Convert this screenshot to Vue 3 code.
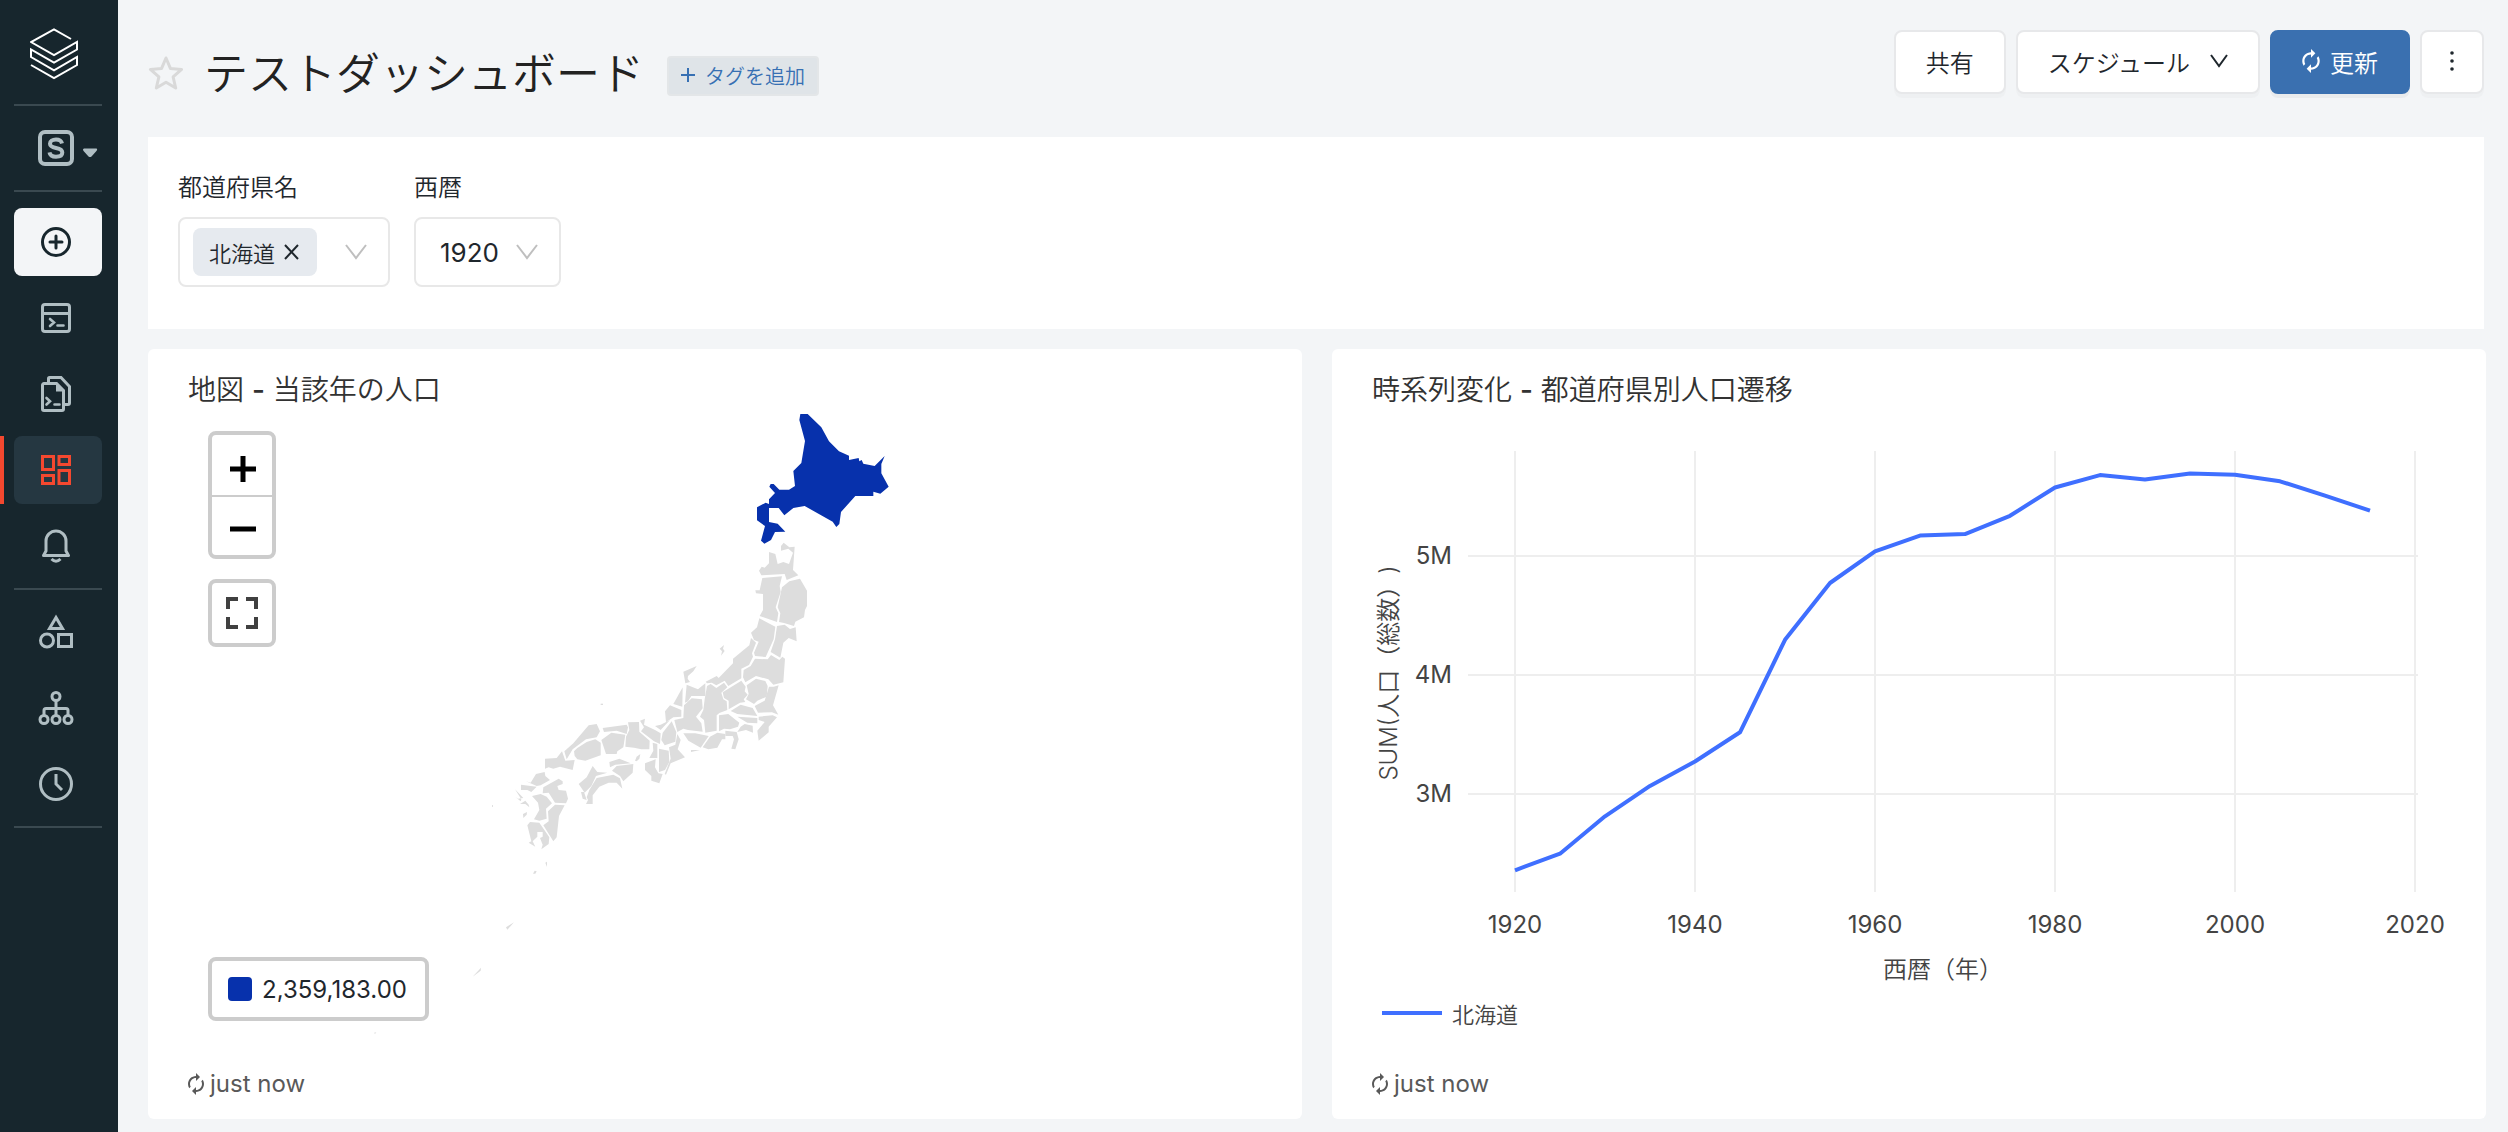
<script setup>
import { ref } from 'vue'

const year = ref('1920')
const years = ['1920', '1925', '1930', '1935', '1940', '1945', '1950', '1955', '1960']
const prefecture = ref('')

// Population of Hokkaido, one value for every five years from 1920
const population = [
  2359183, 2498679, 2812335, 3068282, 3272718, 3518389, 4295567, 4773087, 5039206, 5171800,
  5184287, 5338206, 5575989, 5679439, 5643647, 5692321, 5683062, 5627737, 5506419, 5381733,
]
const xOf = (y) => 143 + (y - 1920) * 9
const yOf = (v) => 145 + ((5000000 - v) * 119) / 1000000
const linePoints = population.map((v, i) => `${xOf(1920 + i * 5)},${yOf(v).toFixed(1)}`).join(' ')
const xTicks = [1920, 1940, 1960, 1980, 2000, 2020]
const yTicks = [5, 4, 3]

const hokkaido =
  '241,72 263,72 304,112 327,154 357,184 387,197 387,210 416,204 418,214 425,210 430,221 464,228 494,198 484,222 484,250 506,290 481,311 460,305 460,318 406,318 363,366 358,402 349,411 338,395 254,348 220,354 193,376 176,354 147,354 147,396 173,401 196,425 165,426 153,450 133,461 123,452 135,408 111,391 111,352 137,338 147,342 147,328 165,309 148,290 152,282 161,282 178,299 207,299 225,288 220,243 244,219 255,153 238,90'

const east = [
  '483,62 483,48 491,38 508,52 524,50 519,120 535,136 500,150 494,132 424,136 417,122 425,110 434,113 447,100 447,66 466,72 473,102 490,96 507,102 519,68 505,56',
  '427,144 486,139 479,168 482,186 467,232 475,250 471,276 419,258 429,240 429,192 408,190 406,181 419,181',
  '486,172 508,154 540,146 561,182 561,228 555,240 552,262 526,275 522,288 492,279 477,276 481,250 473,232',
  '418,265 466,290 461,328 437,381 405,378 402,368 416,335 402,330 393,308 411,292',
  '471,288 494,284 510,297 527,292 530,334 506,324 490,338 481,383 452,366 465,328',
  '388,346 393,324 408,338 396,370 399,380 387,405 364,416 364,445 325,468 314,452 289,466 275,458 261,460 257,455 290,438 296,444 339,400 339,386',
  '299,356 312,345 309,356 314,363 303,377 306,364',
  '405,386 443,388 453,375 478,390 487,380 495,386 490,457 460,464 445,448 408,438 376,457 369,442 371,420 392,408',
  '190,425 230,408 220,424 204,438 203,446 210,456 196,460',
  '188,472 187,530 160,522',
  '200,464 234,478 256,460 256,498 214,498 204,514 195,518',
  '261,468 272,462 289,474 312,458 322,472 304,488 310,508 320,514 322,540 298,549 290,556 290,602 256,608 252,570 240,560 250,540 254,508',
  '308,487 364,452 377,470 374,484 383,494 371,508 376,516 360,518 326,538 326,512 312,504',
  '380,466 408,446 436,453 443,468 440,500 412,512 402,522 378,508 386,492',
  '447,470 461,470 476,466 459,526 475,554 456,547 414,548 404,528 434,512',
  '332,543 362,524 398,534 412,558 352,552',
  '416,560 458,556 471,562 446,590 446,607 416,632 412,602 434,576 416,570',
  '352,560 412,564 412,580 382,578',
  '362,590 374,582 398,587 399,608 378,600 352,606',
  '297,556 325,552 358,578 354,590 330,598 312,596 297,604',
  '248,652 270,620 292,608 316,612 316,628 306,628 292,653 265,658',
  '316,602 350,606 356,628 346,658 334,656 342,628 338,618 316,618',
  '163,570 190,564 192,526 215,505 246,508 248,535 228,560 244,580 248,605 204,600 190,596 172,606',
  '190,610 226,610 266,618 242,653 205,632',
  '213,660 240,660 213,666',
  '135,544 150,526 184,540 184,560 160,562 138,577',
]

const west = [
  '645,138 662,134 690,120 662,150',
  '668,158 695,124 709,156 706,185 674,196 664,180',
  '600,122 615,116 612,134 645,150 662,160 660,192 642,184 603,154 612,142',
  '564,127 597,126 598,155 629,182 628,208 604,208 582,203 556,200 558,170 568,150',
  '638,188 652,192 652,234 628,234 640,212',
  '657,206 686,212 688,246 675,270 657,276',
  '687,202 706,194 712,162 722,180 713,208 735,232 692,250 678,284 674,282 692,236',
  '615,250 647,238 645,262 655,280 668,282 658,310 634,302 634,288 615,270',
  '488,144 560,134 564,142 560,162 530,152 492,156',
  '484,180 514,158 556,164 550,202 532,214 530,222 498,222',
  '373,214 400,190 446,136 470,132 480,154 470,172 438,178 398,208 380,238',
  '402,214 412,204 440,186 466,178 482,188 482,226 436,242 412,238 404,228',
  '315,236 350,234 366,214 376,242 404,240 398,270 360,260 340,266 326,262 315,266',
  '508,246 538,236 572,250 526,254 510,262',
  '516,272 530,258 580,252 578,278 550,304 540,288',
  '416,312 440,292 458,258 472,276 502,278 468,288 454,318 434,338',
  '440,352 448,330 470,294 520,284 540,295 547,326 530,308 506,308 478,320 458,346 458,372 438,372 444,360',
  '423,336 432,336 440,360 428,356',
  '585,242 590,230 601,222 598,236 590,244',
  '272,308 288,282 314,276 316,288 330,300 302,316 290,318 258,304',
  '243,314 290,320 274,336 262,330 243,330',
  '225,328 250,354 234,356 225,350 242,364 244,358',
  '240,372 256,362 266,374 268,382 256,372',
  '310,322 356,296 368,304 368,312 352,318 356,330 378,332 384,356 378,370 345,368 326,338 308,340',
  '276,348 302,342 320,350 336,370 318,386 320,416 298,422 282,418 298,390 294,368',
  '345,374 374,376 357,408 350,472 340,484 310,436 326,424 324,394',
  '262,436 270,426 298,428 328,472 326,492 304,508 308,494 300,474 308,470 308,456 292,456 292,470 278,484 286,500 266,488 274,484',
  '249,402 261,396 260,404 250,414',
  '316,548 321,545 321,561',
  '284,572 290,574 286,581 279,581',
  '198,742 222,727 202,749',
  '98,890 123,863 122,872',
  '482,71 489,71 489,75 482,75',
  '156,375 159,376 159,381 156,380',
  '-198,1058 -191,1057 -195,1062',
]
</script>

<template>
  <div class="app">
    <nav class="sidebar" aria-label="メイン">
      <a class="logo" href="#" aria-label="ホーム">
        <svg width="48" height="52" viewBox="0 0 48 52" fill="none" stroke="currentColor" stroke-width="2">
          <path d="M41 11 24 1.4 1 14l23 13L47 14v7.5L24 34.5 1 21.5V29l23 13.4L47 29v8L24 50 1 37" />
        </svg>
      </a>
      <hr />
      <button class="workspace" aria-label="ワークスペース">
        <svg width="60" height="36" viewBox="0 0 60 36" fill="none" stroke="currentColor">
          <rect x="2" y="2" width="32" height="32" rx="5" stroke-width="4" />
          <path d="M24 13.5c-.6-2.700-2.900-4-6-4-3.600 0-6 1.700-6 4.300 0 2.800 2.600 3.500 6 4.200 3.800.7 6.300 1.600 6.300 4.500 0 2.700-2.600 4.200-6.300 4.200s-6-1.500-6.500-4.400" stroke-width="4" />
          <path d="M46 18.500h12.500q1.500 1-.5 3l-4.500 5q-1.500 1-3 0l-4.500-5q-2-2 0-3z" fill="currentColor" stroke="none" />
        </svg>
      </button>
      <hr />
      <div class="nav-group first">
        <button class="nav-item create" aria-label="作成">
          <svg width="30" height="30" viewBox="0 0 30 30" fill="none" stroke="currentColor" stroke-width="3">
            <circle cx="15" cy="15" r="13.500" />
            <path d="M15 9v12M9 15h12" stroke-linecap="round" />
          </svg>
        </button>
        <a class="nav-item" href="#" aria-label="SQLエディタ">
          <svg width="30" height="30" viewBox="0 0 30 30" fill="none" stroke="currentColor" stroke-width="3">
            <rect x="1.500" y="1.500" width="27" height="27" rx="2.500" />
            <path d="M1.500 10.500h27" />
            <path d="m9 16 4 3.500L9 23M16.500 22.500h6" stroke-width="2.600" stroke-linecap="round" />
          </svg>
        </a>
        <a class="nav-item" href="#" aria-label="クエリ">
          <svg width="30" height="36" viewBox="0 0 30 36" fill="none" stroke="currentColor" stroke-width="3">
            <path d="M1.500 9a1.500 1.500 0 0 1 1.500-1.500h12.500l7 7V33a1.500 1.500 0 0 1-1.500 1.500H3A1.500 1.500 0 0 1 1.500 33z" />
            <path d="M15 6.500h1l7.500 7.500v1.500H15z" fill="currentColor" stroke="none" />
            <path d="M7.500 7V2.500a1 1 0 0 1 1-1H20l8.500 9V27a1.500 1.500 0 0 1-1.500 1.500h-4" />
            <path d="m5.500 22 3.500 3.200-3.500 3.300M13.500 28.500h5" stroke-width="2.600" stroke-linecap="round" />
          </svg>
        </a>
        <a class="nav-item active" href="#" aria-label="ダッシュボード" aria-current="page">
          <svg width="30" height="30" viewBox="0 0 30 30" fill="none" stroke="currentColor" stroke-width="3">
            <path d="M1.500 1.500h11v13h-11zM18 1.500h10.500v8H18zM1.500 20.500h11v8h-11zM18 15.500h10.500v13H18z" />
          </svg>
        </a>
        <a class="nav-item" href="#" aria-label="アラート">
          <svg width="28" height="34" viewBox="0 0 28 34" fill="none" stroke="currentColor" stroke-width="3">
            <path d="M1.500 26.500 4 22V12a10 10 0 0 1 20 0v10l2.500 4.500z" stroke-linejoin="round" />
            <path d="M9.500 30q4.500 4.500 9 0" />
          </svg>
        </a>
      </div>
      <hr />
      <div class="nav-group">
        <a class="nav-item" href="#" aria-label="データ">
          <svg width="34" height="36" viewBox="0 0 34 36" fill="none" stroke="currentColor" stroke-width="3">
            <path d="M17 3.500 10.500 14.500h13zM19.500 20.500h13v12h-13z" />
            <circle cx="8" cy="26.500" r="6.500" />
          </svg>
        </a>
        <a class="nav-item" href="#" aria-label="SQLウェアハウス">
          <svg width="36" height="34" viewBox="0 0 36 34" fill="none" stroke="currentColor" stroke-width="3">
            <circle cx="18" cy="5.500" r="4" />
            <circle cx="6" cy="28.500" r="4" />
            <circle cx="18" cy="28.500" r="4" />
            <circle cx="30" cy="28.500" r="4" />
            <path d="M18 9.500v15M6 24.500v-5a2 2 0 0 1 2-2h20a2 2 0 0 1 2 2v5" />
          </svg>
        </a>
        <a class="nav-item" href="#" aria-label="クエリ履歴">
          <svg width="34" height="34" viewBox="0 0 34 34" fill="none" stroke="currentColor" stroke-width="3">
            <circle cx="17" cy="17" r="15.500" />
            <path d="M17 7v10l6 6" />
          </svg>
        </a>
      </div>
      <hr />
    </nav>

    <main class="main">
      <header class="header">
        <button class="star" aria-label="お気に入り">
          <svg width="36" height="36" viewBox="0 0 36 36" fill="none" stroke="currentColor" stroke-width="3" stroke-linejoin="round">
            <path d="m18 3 4.400 10.400 11.200 1-8.500 7.400 2.600 11.200L18 27.200 8.300 33l2.600-11.200-8.500-7.400 11.200-1z" />
          </svg>
        </button>
        <h1>テストダッシュボード</h1>
        <button class="add-tag">
          <svg width="14" height="14" viewBox="0 0 14 14" fill="none" stroke="currentColor" stroke-width="2">
            <path d="M7 0v14M0 7h14" />
          </svg>
          タグを追加
        </button>
        <div class="actions">
          <button class="btn">共有</button>
          <button class="btn schedule">
            スケジュール
            <svg width="18" height="14" viewBox="0 0 18 14" fill="none" stroke="currentColor" stroke-width="2">
              <path d="m1 1 8 11 8-11" />
            </svg>
          </button>
          <button class="btn primary">
            <svg width="18" height="24" viewBox="4 1 16 22" fill="currentColor">
              <path d="M12 6v3l4-4-4-4v3c-4.420 0-8 3.580-8 8 0 1.570.46 3.030 1.240 4.260L6.700 14.800c-.45-.83-.7-1.790-.7-2.800 0-3.310 2.690-6 6-6zm6.760 1.740L17.300 9.200c.44.84.7 1.790.7 2.800 0 3.310-2.690 6-6 6v-3l-4 4 4 4v-3c4.420 0 8-3.580 8-8 0-1.570-.46-3.030-1.240-4.260z" />
            </svg>
            更新
          </button>
          <button class="btn more" aria-label="その他">
            <svg width="4" height="22" viewBox="0 0 4 22" fill="currentColor">
              <circle cx="2" cy="3" r="1.800" />
              <circle cx="2" cy="11" r="1.800" />
              <circle cx="2" cy="19" r="1.800" />
            </svg>
          </button>
        </div>
      </header>

      <section class="filters">
        <div class="field">
          <label for="prefecture">都道府県名</label>
          <div class="box multi">
            <span class="chip">
              北海道
              <button aria-label="北海道を削除">
                <svg width="15" height="16" viewBox="0 0 15 16" fill="none" stroke="currentColor" stroke-width="2">
                  <path d="m1 1 13 14M14 1 1 15" />
                </svg>
              </button>
            </span>
            <input id="prefecture" v-model="prefecture" type="text" />
            <svg class="chevron" width="22" height="16" viewBox="0 0 22 16" fill="none" stroke="currentColor" stroke-width="2">
              <path d="m1 1 10 13L21 1" />
            </svg>
          </div>
        </div>
        <div class="field">
          <label for="year">西暦</label>
          <div class="box single">
            <select id="year" v-model="year">
              <option v-for="y in years" :key="y" :value="y">{{ y }}</option>
            </select>
            <svg class="chevron" width="22" height="16" viewBox="0 0 22 16" fill="none" stroke="currentColor" stroke-width="2">
              <path d="m1 1 10 13L21 1" />
            </svg>
          </div>
        </div>
      </section>

      <div class="widgets">
        <article class="card">
          <h2>地図 <b>-</b> 当該年の人口</h2>
          <div class="map">
            <svg class="map-canvas" viewBox="-756 63 3222 1890" role="img" aria-label="日本地図">
              <g fill="#dddddd">
                <g transform="translate(540 420)">
                  <polygon v-for="p in east" :key="p" :points="p" />
                </g>
                <g transform="translate(0 870)">
                  <polygon v-for="p in west" :key="p" :points="p" />
                </g>
              </g>
              <polygon transform="translate(840 0)" :points="hokkaido" fill="#0731ac" />
            </svg>
            <div class="map-controls">
              <div class="control">
                <button aria-label="拡大">
                  <svg width="26" height="26" viewBox="0 0 26 26" stroke="currentColor" stroke-width="5">
                    <path d="M13 0v26M0 13h26" />
                  </svg>
                </button>
                <button aria-label="縮小">
                  <svg width="26" height="26" viewBox="0 0 26 26" stroke="currentColor" stroke-width="5">
                    <path d="M0 13h26" />
                  </svg>
                </button>
              </div>
              <div class="control">
                <button class="fullscreen" aria-label="全画面表示">
                  <svg width="32" height="32" viewBox="0 0 32 32" fill="none" stroke="currentColor" stroke-width="4">
                    <path d="M2 12V2h10M20 2h10v10M30 20v10H20M12 30H2V20" />
                  </svg>
                </button>
              </div>
            </div>
            <div class="map-legend"><i></i>2,359,183.00</div>
          </div>
          <footer>
            <svg width="16" height="22" viewBox="4 1 16 22" fill="currentColor">
              <path d="M12 6v3l4-4-4-4v3c-4.420 0-8 3.580-8 8 0 1.570.46 3.030 1.240 4.260L6.700 14.800c-.45-.83-.7-1.790-.7-2.800 0-3.310 2.690-6 6-6zm6.760 1.740L17.300 9.200c.44.84.7 1.790.7 2.800 0 3.310-2.690 6-6 6v-3l-4 4 4 4v-3c4.420 0 8-3.580 8-8 0-1.570-.46-3.030-1.240-4.260z" />
            </svg>
            just now
          </footer>
        </article>

        <article class="card">
          <h2>時系列変化 <b>-</b> 都道府県別人口遷移</h2>
          <div class="chart">
            <svg class="chart-canvas" viewBox="0 0 1074 586" role="img" aria-label="都道府県別人口遷移">
              <g stroke="#eeeeee" stroke-width="2">
                <line v-for="x in xTicks" :key="x" :x1="xOf(x)" :x2="xOf(x)" y1="40" y2="481" />
                <line v-for="y in yTicks" :key="y" x1="96" x2="1046" :y1="yOf(y * 1000000)" :y2="yOf(y * 1000000)" />
              </g>
              <polyline :points="linePoints" fill="none" stroke="#3f6fff" stroke-width="4" stroke-linejoin="round" />
              <g class="ticks">
                <text v-for="x in xTicks" :key="x" :x="xOf(x)" y="522" text-anchor="middle">{{ x }}</text>
                <text v-for="y in yTicks" :key="y" x="80" :y="yOf(y * 1000000) + 8" text-anchor="end">{{ y }}M</text>
              </g>
              <g class="axis-titles">
                <text x="571" y="567" text-anchor="middle">西暦（年）</text>
                <text transform="translate(25 262) rotate(-90)" text-anchor="middle">SUM(人口（総数）)</text>
              </g>
            </svg>
            <div class="chart-legend"><i></i>北海道</div>
          </div>
          <footer>
            <svg width="16" height="22" viewBox="4 1 16 22" fill="currentColor">
              <path d="M12 6v3l4-4-4-4v3c-4.420 0-8 3.580-8 8 0 1.570.46 3.030 1.240 4.260L6.700 14.800c-.45-.83-.7-1.790-.7-2.800 0-3.310 2.690-6 6-6zm6.760 1.740L17.300 9.200c.44.84.7 1.790.7 2.800 0 3.310-2.690 6-6 6v-3l-4 4 4 4v-3c4.420 0 8-3.580 8-8 0-1.570-.46-3.030-1.240-4.260z" />
            </svg>
            just now
          </footer>
        </article>
      </div>
    </main>
  </div>
</template>

<style>
body {
  background: #f3f5f7;
}
</style>

<style scoped>
* {
  box-sizing: border-box;
}

.app {
  display: flex;
  min-height: 100vh;
  font-family: Inter, 'Noto Sans CJK JP', sans-serif;
  font-size: 24px;
  font-weight: 350;
  color: #1f272d;
}

svg {
  display: block;
  flex: none;
}

button,
input,
select {
  font: inherit;
  color: inherit;
  margin: 0;
  padding: 0;
  border: 0;
  background: none;
}

.sidebar {
  flex: none;
  display: flex;
  flex-direction: column;
  width: 118px;
  padding: 28px 16px 0 14px;
  background: #17262d;
  color: #b0bec3;
}

.sidebar hr {
  width: 100%;
  height: 2px;
  margin: 0;
  border: 0;
  background: #3a4950;
}

.logo {
  height: 76px;
  padding-left: 16px;
  color: #ffffff;
}

.workspace {
  height: 84px;
  padding-left: 24px;
}

.nav-group {
  display: flex;
  flex-direction: column;
  gap: 8px;
  padding: 8px 0;
}

.nav-group.first {
  padding-top: 16px;
}

.nav-item {
  position: relative;
  display: flex;
  align-items: center;
  justify-content: center;
  height: 68px;
  padding-right: 4px;
  border-radius: 8px;
  color: inherit;
}

.nav-item.create {
  background: #f3f5f7;
  color: #17262d;
}

.nav-item.active {
  background: #253741;
  color: #f4482f;
}

.nav-item.active::before {
  content: '';
  position: absolute;
  top: 0;
  bottom: 0;
  left: -14px;
  width: 4px;
  background: currentColor;
}

.main {
  flex: 1;
  min-width: 0;
  padding: 30px 22px 12px 30px;
}

.header {
  display: flex;
  align-items: flex-start;
  margin-right: 2px;
  padding-bottom: 31px;
}

.star {
  margin: 25px 20px 0 0;
  color: #d9d9d9;
}

h1 {
  margin: 12px 0 0;
  font-size: 44px;
  line-height: 64px;
  font-weight: 350;
  color: #222222;
}

.add-tag {
  display: flex;
  align-items: center;
  gap: 10px;
  height: 40px;
  margin: 26px 0 0 23px;
  padding: 0 12px 2px;
  border: 2px solid #e3e6e8;
  border-radius: 4px;
  background: #dfe4e8;
  color: #3770b3;
  font-size: 20px;
}

.actions {
  display: flex;
  gap: 10px;
  margin-left: auto;
}

.btn {
  display: flex;
  align-items: center;
  justify-content: center;
  gap: 10px;
  height: 64px;
  padding: 0 30px 2px;
  border: 2px solid #e7e8ea;
  border-radius: 8px;
  background: #ffffff;
  box-shadow: 0 4px 0 rgba(0, 0, 0, 0.02);
  white-space: nowrap;
}

.btn.schedule {
  gap: 20px;
}

.btn.primary {
  border-color: #3a70b0;
  background: #3a70b0;
  color: #ffffff;
  box-shadow: 0 4px 0 rgba(0, 0, 0, 0.04);
}

.btn.more {
  width: 64px;
}

.filters {
  display: flex;
  gap: 24px;
  margin-right: 2px;
  padding: 32px 30px 42px;
  background: #ffffff;
}

.field label {
  display: block;
  margin-bottom: 10px;
  line-height: 38px;
}

.box {
  position: relative;
  display: flex;
  align-items: center;
  height: 70px;
  border: 2px solid #e8e8e8;
  border-radius: 8px;
}

.multi {
  width: 212px;
  padding: 0 21px 0 13px;
}

.multi input {
  flex: 1;
  width: 0;
  min-width: 0;
  outline: 0;
}

.chip {
  display: flex;
  align-items: center;
  gap: 9px;
  height: 48px;
  padding: 0 18px 0 16px;
  border-radius: 8px;
  background: #e6eaef;
  font-size: 22px;
}

.chevron {
  color: #bfbfbf;
}

.single select {
  height: 66px;
  width: 143px;
  padding: 0 48px 0 24px;
  appearance: none;
  font-size: 26px;
  font-weight: 400;
}

.single .chevron {
  position: absolute;
  right: 21px;
  pointer-events: none;
}

.widgets {
  display: grid;
  grid-template-columns: 1fr 1fr;
  gap: 30px;
  margin-top: 20px;
}

.card {
  min-width: 0;
  padding: 20px 40px;
  border-radius: 6px;
  background: #ffffff;
}

h2 {
  margin: 0;
  font-size: 28px;
  line-height: 42px;
  font-weight: 350;
  color: #323232;
}

h2 b {
  font-weight: 500;
}

.map {
  position: relative;
  height: 630px;
}

.map-canvas {
  width: 100%;
  height: 100%;
}

.map-controls {
  position: absolute;
  top: 20px;
  left: 20px;
  display: flex;
  flex-direction: column;
  gap: 20px;
}

.control {
  width: 68px;
  border: 4px solid #cccccc;
  border-radius: 8px;
  background: #ffffff;
}

.control button {
  display: flex;
  align-items: center;
  justify-content: center;
  width: 100%;
  height: 60px;
  padding: 8px 0 0 2px;
  color: #000000;
}

.control button + button {
  border-top: 2px solid #cccccc;
}

.control button:nth-child(2) {
  padding-top: 6px;
}

.control button.fullscreen {
  padding: 0;
  color: #404040;
}

.map-legend {
  position: absolute;
  left: 20px;
  bottom: 20px;
  display: flex;
  align-items: center;
  gap: 10px;
  height: 64px;
  padding: 0 18px 0 16px;
  border: 4px solid #cccccc;
  border-radius: 8px;
  background: #ffffff;
  font-weight: 400;
}

.map-legend i {
  width: 24px;
  height: 24px;
  border-radius: 4px;
  background: #0731ac;
}

.chart {
  height: 630px;
}

.chart-canvas {
  width: 100%;
  height: 586px;
}

.ticks {
  font-weight: 400;
  fill: #444444;
}

.axis-titles {
  fill: #444444;
  text-spacing-trim: space-all;
}

.chart-legend {
  display: flex;
  align-items: center;
  gap: 10px;
  height: 32px;
  padding-left: 10px;
  font-size: 22px;
  color: #444444;
}

.chart-legend i {
  width: 60px;
  height: 4px;
  background: #3f6fff;
}

footer {
  display: flex;
  align-items: center;
  gap: 6px;
  margin-top: 28px;
  line-height: 30px;
  font-weight: 400;
  color: #595959;
}
</style>
